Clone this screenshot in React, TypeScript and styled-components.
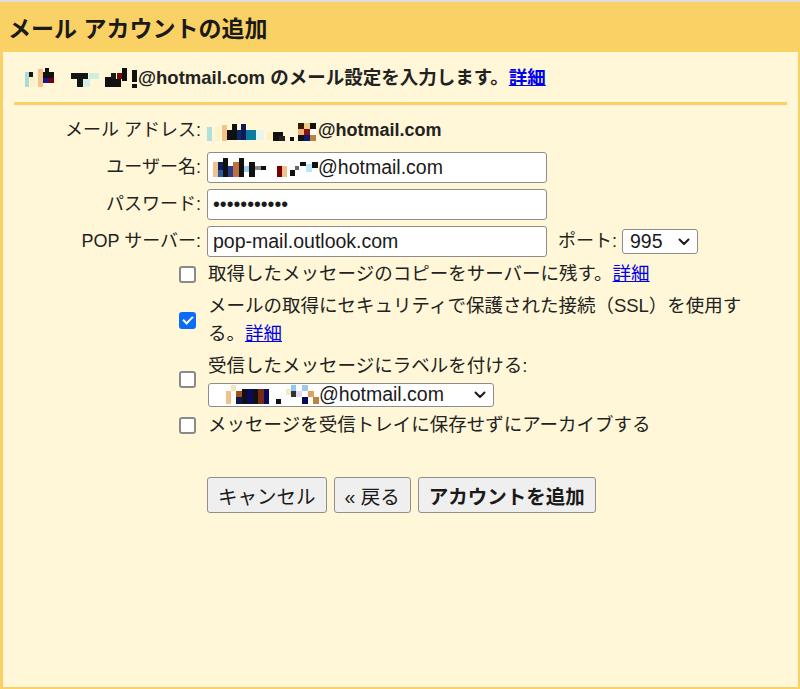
import styled, { createGlobalStyle } from 'styled-components';

const GlobalStyle = createGlobalStyle`
  html, body {
    margin: 0;
    padding: 0;
    background: #fff7d7;
  }
  body {
    font-family: "Liberation Sans", "Noto Sans CJK JP", sans-serif;
    color: #222222;
  }
`;

const Frame = styled.div`
  height: 689px;
  box-sizing: border-box;
  display: flex;
  flex-direction: column;
  border-top: 2px solid #dedede;
`;

const Header = styled.div`
  height: 50px;
  flex: none;
  display: flex;
  align-items: center;
  padding-left: 8px;
  background: #fad165;
`;

const Title = styled.h1`
  margin: 0;
  font-size: 23px;
  font-weight: 700;
  color: #1a1a1a;
`;

const Body = styled.div`
  flex: 1;
  background: #fff7d7;
  border-left: 3px solid #fad165;
  border-right: 2px solid #fad165;
  border-bottom: 2px solid #fad165;
`;

const Intro = styled.div`
  padding: 12px 0 0 22px;
  font-size: 18.5px;
  font-weight: 700;
  line-height: 28px;
`;

const Link = styled.a`
  color: #0000ee;
  text-decoration: underline;
  cursor: pointer;
`;

const Divider = styled.div`
  height: 3px;
  margin: 10px 11px 0 11px;
  background: #fad165;
`;

const FormGrid = styled.div`
  margin-top: 10px;
  display: grid;
  grid-template-columns: 198px auto;
  column-gap: 6px;
  row-gap: 6px;
  align-items: center;
  justify-content: start;
`;

const Label = styled.div`
  text-align: right;
  font-size: 18px;
  line-height: 31px;
  white-space: nowrap;
`;

const Value = styled.div<{ $bold?: boolean }>`
  display: flex;
  align-items: center;
  gap: 10px;
  font-size: 18px;
  line-height: 31px;
  font-weight: ${p => (p.$bold ? 700 : 400)};
  white-space: nowrap;
`;

const InputBox = styled.div`
  width: 340px;
  height: 31px;
  box-sizing: border-box;
  display: flex;
  align-items: center;
  padding: 0 5px;
  background: #ffffff;
  border: 1px solid #8d8d8d;
  border-radius: 3px;
  font-size: 19.5px;
  color: #1a1a1a;
  white-space: nowrap;
  overflow: hidden;
`;

const PortLabel = styled.span`
  margin-left: 1px;
  margin-right: -5px;
  font-size: 18px;
`;

const SelectBox = styled.div<{ $width: number; $height: number }>`
  width: ${p => p.$width}px;
  height: ${p => p.$height}px;
  box-sizing: border-box;
  display: flex;
  align-items: center;
  justify-content: space-between;
  padding: 0 7px 0 7px;
  background: #ffffff;
  border: 1px solid #8d8d8d;
  border-radius: 3px;
  font-size: 19.5px;
  line-height: 1;
  color: #1a1a1a;
  white-space: nowrap;
`;

const SelectText = styled.span`
  display: flex;
  align-items: center;
`;

const Options = styled.div`
  margin: 3px 0 0 176px;
  display: flex;
  flex-direction: column;
  gap: 4px;
`;

const CheckRow = styled.label`
  display: grid;
  grid-template-columns: 17px 540px;
  column-gap: 12px;
  align-items: center;
  font-size: 18.5px;
  line-height: 28px;
`;

const CheckText = styled.div`
  display: flex;
  flex-direction: column;
  align-items: flex-start;
  gap: 3px;
`;

const Checkbox = styled.input.attrs({ type: 'checkbox' })`
  appearance: none;
  -webkit-appearance: none;
  position: relative;
  width: 17px;
  height: 17px;
  margin: 0;
  box-sizing: border-box;
  background: #ffffff;
  border: 2px solid #8a8a8a;
  border-radius: 3px;

  &:checked {
    background: #0b6cf7;
    border-color: #0b6cf7;
  }

  &:checked::after {
    content: '';
    position: absolute;
    left: 4px;
    top: 0px;
    width: 4px;
    height: 8px;
    border: solid #ffffff;
    border-width: 0 2.5px 2.5px 0;
    transform: rotate(45deg);
  }
`;

const Actions = styled.div`
  margin: 38px 0 0 204px;
  display: flex;
  gap: 7px;
`;

const Button = styled.button<{ $primary?: boolean }>`
  height: 36px;
  padding: 0 10px;
  box-sizing: border-box;
  background: #efefef;
  border: 1px solid #8f8f8f;
  border-radius: 3px;
  font-family: inherit;
  font-size: 19.5px;
  font-weight: ${p => (p.$primary ? 700 : 400)};
  color: #1a1a1a;
  cursor: pointer;
`;

type Block = [number, number, number, number, string];

const MosaicSvg = styled.svg`
  display: inline-block;
  flex: none;
  vertical-align: middle;
`;

const Mosaic = ({ width, height, blocks }: { width: number; height: number; blocks: Block[] }) => (
  <MosaicSvg width={width} height={height} viewBox={`0 0 ${width} ${height}`}>
    {blocks.map(([x, y, w, h, c], i) => (
      <rect key={i} x={x} y={y} width={w} height={h} fill={c} />
    ))}
  </MosaicSvg>
);

const Chevron = () => (
  <svg width="12" height="8" viewBox="0 0 12 8" fill="none" stroke="#1a1a1a" strokeWidth="2" strokeLinecap="round" strokeLinejoin="round">
    <path d="M1.5 1.5 L6 6 L10.5 1.5" />
  </svg>
);

const introBlocks: Block[] = [
  [0, 4, 4, 15, '#a9dcd9'],
  [4, 4, 4, 5, '#161616'],
  [5, 9, 5, 10, '#fff0c4'],
  [13, 1, 5, 18, '#f6c489'],
  [18, 4, 6, 6, '#111'],
  [24, 4, 5, 6, '#111'],
  [20, 0, 4, 4, '#111'],
  [18, 10, 6, 5, '#17178a'],
  [24, 10, 5, 5, '#7a0000'],
  [46, 5, 17, 6, '#141414'],
  [52, 11, 6, 8, '#141414'],
  [58, 11, 7, 8, '#d8f0e4'],
  [64, 5, 10, 6, '#cfeee0'],
  [80, 9, 6, 10, '#111'],
  [86, 5, 5, 6, '#1b1b1b'],
  [86, 11, 10, 8, '#111'],
  [92, 5, 6, 6, '#7a0a0a'],
  [97, 0, 5, 13, '#111'],
  [107, 2, 5, 12, '#111'],
  [107, 16, 5, 4, '#111'],
];

const addressBlocks: Block[] = [
  [0, 7, 5, 14, '#b0e0dc'],
  [8, 7, 5, 14, '#fff2c6'],
  [15, 5, 5, 16, '#f5c285'],
  [20, 10, 5, 10, '#111'],
  [25, 4, 5, 16, '#111'],
  [30, 10, 4, 10, '#0e2a6e'],
  [34, 4, 5, 16, '#0c1a55'],
  [39, 10, 10, 10, '#0a7aa0'],
  [49, 10, 8, 10, '#e8f4ec'],
  [60, 12, 6, 8, '#fff0c0'],
  [66, 12, 10, 9, '#111'],
  [72, 16, 6, 5, '#222'],
  [83, 17, 4, 4, '#111'],
  [91, 3, 6, 6, '#3a1a00'],
  [97, 3, 6, 6, '#f0d080'],
  [103, 3, 6, 6, '#111'],
  [91, 9, 6, 6, '#f5b070'],
  [97, 9, 6, 6, '#8a1010'],
  [103, 9, 6, 6, '#ffffff'],
  [91, 15, 6, 6, '#111'],
  [97, 15, 6, 6, '#0c1a6e'],
  [103, 15, 6, 6, '#c08040'],
];

const userBlocks: Block[] = [
  [0, 4, 5, 15, '#f2c08a'],
  [5, 4, 5, 8, '#0e1d5e'],
  [5, 12, 5, 7, '#2a5a9e'],
  [10, 0, 5, 19, '#111'],
  [15, 8, 5, 11, '#2a3a8e'],
  [20, 4, 6, 15, '#c0703a'],
  [26, 0, 5, 19, '#111'],
  [31, 8, 5, 6, '#9ad0f0'],
  [36, 4, 6, 15, '#111'],
  [42, 8, 6, 4, '#8a8a8a'],
  [48, 8, 5, 4, '#111'],
  [64, 8, 5, 11, '#7a0000'],
  [69, 8, 5, 11, '#f2c08a'],
  [77, 12, 5, 6, '#111'],
  [82, 8, 4, 4, '#666'],
  [87, 4, 6, 4, '#111'],
  [93, 6, 6, 8, '#bfe4f8'],
  [99, 4, 6, 6, '#111'],
];

const labelBlocks: Block[] = [
  [10, 6, 5, 13, '#f2c08a'],
  [15, 0, 5, 6, '#f0e6c0'],
  [20, 6, 6, 6, '#a0501a'],
  [20, 12, 6, 7, '#0c1a4e'],
  [26, 4, 5, 15, '#111'],
  [31, 4, 6, 15, '#0a0a60'],
  [37, 4, 5, 15, '#111'],
  [42, 4, 6, 15, '#7a2a10'],
  [48, 4, 5, 15, '#0a0a5a'],
  [60, 14, 5, 5, '#111'],
  [70, 4, 5, 6, '#f6e8c8'],
  [75, 0, 5, 6, '#90c8f0'],
  [75, 6, 5, 6, '#333'],
  [80, 6, 6, 6, '#dde'],
  [86, 0, 6, 6, '#a0c8e8'],
  [86, 12, 6, 7, '#0a0a5a'],
  [92, 6, 6, 6, '#e0a060'],
  [97, 12, 6, 7, '#c08040'],
];

export default function App() {
  return (
    <>
      <GlobalStyle />
      <Frame>
        <Header>
          <Title>メール アカウントの追加</Title>
        </Header>
        <Body>
          <Intro>
            <Mosaic width={113} height={22} blocks={introBlocks} />
            @hotmail.com のメール設定を入力します。<Link>詳細</Link>
          </Intro>
          <Divider />

          <FormGrid>
            <Label>メール アドレス:</Label>
            <Value $bold>
              <span>
                <Mosaic width={111} height={22} blocks={addressBlocks} />
                @hotmail.com
              </span>
            </Value>

            <Label>ユーザー名:</Label>
            <Value>
              <InputBox>
                <Mosaic width={105} height={20} blocks={userBlocks} />
                @hotmail.com
              </InputBox>
            </Value>

            <Label>パスワード:</Label>
            <Value>
              <InputBox>•••••••••••</InputBox>
            </Value>

            <Label>POP サーバー:</Label>
            <Value>
              <InputBox>pop-mail.outlook.com</InputBox>
              <PortLabel>ポート:</PortLabel>
              <SelectBox $width={76} $height={25}>
                <SelectText>995</SelectText>
                <Chevron />
              </SelectBox>
            </Value>
          </FormGrid>

          <Options>
            <CheckRow>
              <Checkbox />
              <CheckText>
                <span>
                  取得したメッセージのコピーをサーバーに残す。<Link>詳細</Link>
                </span>
              </CheckText>
            </CheckRow>
            <CheckRow>
              <Checkbox defaultChecked />
              <CheckText>
                <span>
                  メールの取得にセキュリティで保護された接続（SSL）を使用する。<Link>詳細</Link>
                </span>
              </CheckText>
            </CheckRow>
            <CheckRow>
              <Checkbox />
              <CheckText>
                <span>受信したメッセージにラベルを付ける:</span>
                <SelectBox $width={286} $height={24}>
                  <SelectText>
                    <Mosaic width={103} height={20} blocks={labelBlocks} />
                    @hotmail.com
                  </SelectText>
                  <Chevron />
                </SelectBox>
              </CheckText>
            </CheckRow>
            <CheckRow>
              <Checkbox />
              <CheckText>
                <span>メッセージを受信トレイに保存せずにアーカイブする</span>
              </CheckText>
            </CheckRow>
          </Options>

          <Actions>
            <Button>キャンセル</Button>
            <Button>« 戻る</Button>
            <Button $primary>アカウントを追加</Button>
          </Actions>
        </Body>
      </Frame>
    </>
  );
}
